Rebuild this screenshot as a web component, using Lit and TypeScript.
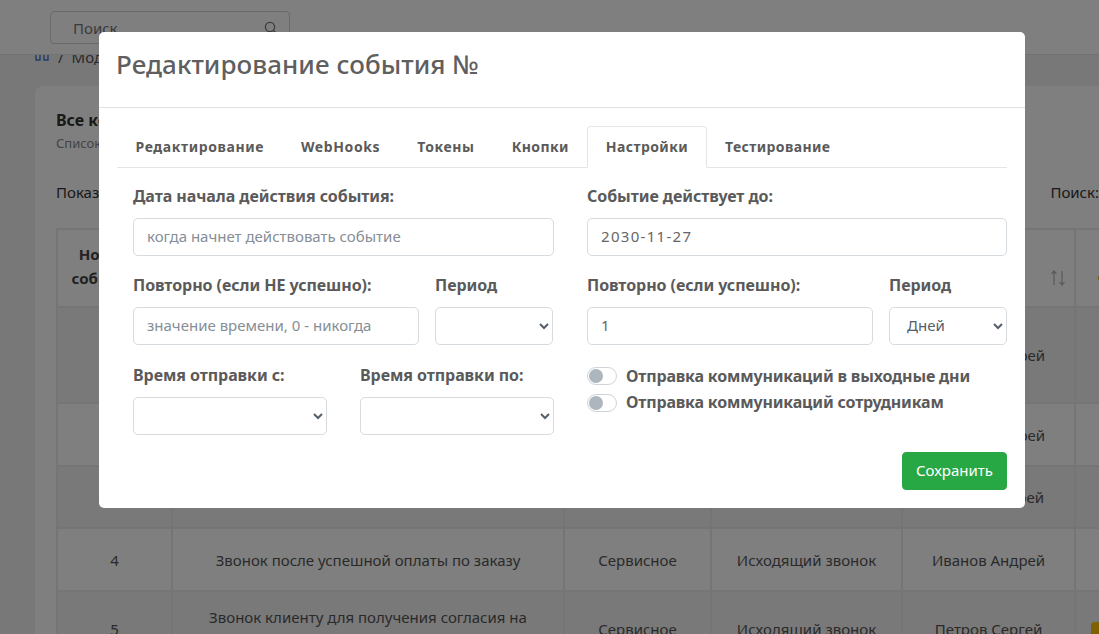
import { LitElement, html, css } from 'lit'
import { customElement } from 'lit/decorators.js'

const rows = [
  { n: '1', name: 'Звонок клиенту после оформления заказа', type: 'Сервисное', kind: 'Исходящий звонок', who: 'Иванов Андрей', h: 96 },
  { n: '2', name: 'Звонок клиенту после доставки', type: 'Сервисное', kind: 'Исходящий звонок', who: 'Иванов Андрей', h: 63 },
  { n: '3', name: 'Звонок клиенту при отмене заказа', type: 'Сервисное', kind: 'Исходящий звонок', who: 'Петров Андрей', h: 62 },
  { n: '4', name: 'Звонок после успешной оплаты по заказу', type: 'Сервисное', kind: 'Исходящий звонок', who: 'Иванов Андрей', h: 63 },
  { n: '5', name: 'Звонок клиенту для получения согласия на обработку данных', type: 'Сервисное', kind: 'Исходящий звонок', who: 'Петров Сергей', h: 76 }
]

const tabs = ['Редактирование', 'WebHooks', 'Токены', 'Кнопки', 'Настройки', 'Тестирование']

@customElement('app-root')
export class AppRoot extends LitElement {
  static styles = css`
    :host {
      display: block;
      position: relative;
      height: 634px;
      overflow: hidden;
      background: #f0f1f1;
      font-family: "Noto Sans", "Open Sans", sans-serif;
      font-size: 15px;
      color: #555;
    }

    /* page behind the modal */
    .topbar {
      position: relative;
      z-index: 1;
      height: 55px;
      background: #fff;
      border-bottom: 1px solid #e4e4e4;
      padding: 11px 0 0 50px;
      box-sizing: border-box;
    }
    .search {
      width: 240px;
      height: 33px;
      box-sizing: border-box;
      border: 1px solid #ced4da;
      border-radius: 4px;
      padding: 0 11px 0 22px;
      display: flex;
      align-items: center;
      justify-content: space-between;
      color: #777;
    }
    .crumbs {
      height: 31px;
      padding-left: 35px;
      display: flex;
      align-items: flex-start;
      color: #555;
    }
    .crumbs svg { display: block; margin-right: 9px; }
    .crumbs .sep { margin-right: 8px; margin-top: -8px; line-height: 20px; }
    .crumbs .mod { margin-top: -8px; line-height: 20px; }
    .card {
      margin-left: 35px;
      width: 1100px;
      height: 560px;
      background: #fff;
      border-radius: 8px;
      padding: 24px 0 0 21px;
      box-sizing: border-box;
      color: #333;
    }
    .card h4 { margin: 0; font-size: 16px; line-height: 20px; font-weight: 700; color: #333; }
    .card p { margin: 4px 0 0; font-size: 13px; line-height: 18px; color: #888; }
    .len {
      display: flex;
      justify-content: space-between;
      width: 1043px;
      margin-top: 27px;
      line-height: 26px;
    }
    table {
      margin-top: 23px;
      border-collapse: collapse;
      table-layout: fixed;
      width: 1070px;
      color: #555;
    }
    th, td {
      border: 2px solid #eaeaea;
      text-align: center;
      padding: 0 12px;
      line-height: 24px;
      vertical-align: middle;
    }
    th { height: 76px; font-weight: 700; color: #444; }
    th.num { height: 72px; padding: 0 32px 4px 12px; }
    tbody tr:nth-child(odd) { background: #f2f2f2; }
    .sort { display: block; margin: 20px -4px 0 auto; }
    .mark {
      display: block;
      width: 6px;
      height: 6px;
      border-radius: 50%;
      background: #f0a030;
      margin: 20px 0 0 10px;
    }
    .badge {
      display: block;
      width: 22px;
      height: 22px;
      border-radius: 4px;
      background: #ffc107;
      margin: 8px 0 0 3px;
    }

    /* overlay */
    .backdrop {
      position: absolute;
      inset: 0;
      z-index: 2;
      background: rgba(0, 0, 0, 0.5);
    }
    .modal {
      position: absolute;
      z-index: 3;
      left: 99px;
      top: 32px;
      width: 926px;
      height: 476px;
      box-sizing: border-box;
      background: #fff;
      border-radius: 5px;
      display: flex;
      flex-direction: column;
    }
    .modal-head {
      height: 76px;
      box-sizing: border-box;
      border-bottom: 1px solid #dee2e6;
      padding: 12px 18px 0 17px;
    }
    .modal-head h2 {
      margin: 0;
      font-size: 26px;
      line-height: 40px;
      font-weight: 500;
      letter-spacing: 0.05px;
      color: #5f5f5f;
    }
    .modal-body { padding: 18px 18px 0; }

    .tabs {
      display: flex;
      height: 42px;
      box-sizing: border-box;
      border-bottom: 1px solid #e3e6e8;
    }
    .tab {
      box-sizing: border-box;
      height: 42px;
      padding: 0 17.5px 2px 17.5px;
      display: flex;
      align-items: center;
      font-size: 14px;
      font-weight: 700;
      letter-spacing: 0.6px;
      color: #5a5a5a;
      border: 1px solid transparent;
      border-radius: 4px 4px 0 0;
    }
    .tab:nth-child(n+4) { letter-spacing: 0.4px; }
    .tab.active {
      border-color: #e3e6e8;
      border-bottom-color: #fff;
      background: #fff;
    }

    .panel {
      display: grid;
      grid-template-columns: 421px 420px;
      column-gap: 33px;
      align-items: start;
      padding: 15px 0 0 16px;
    }
    .col { display: flex; flex-direction: column; gap: 16px; }
    .line { display: flex; gap: 16px; }
    .line.short { width: 420px; }
    .line.wide { gap: 33px; margin-top: 1px; }
    .field { display: flex; flex-direction: column; gap: 8px; flex: 1; min-width: 0; }
    .field.period { flex: 0 0 118px; }
    label {
      font-size: 16px;
      line-height: 27px;
      font-weight: 700;
      letter-spacing: -0.06px;
      color: #5a5a5a;
      white-space: nowrap;
    }
    input, select {
      box-sizing: border-box;
      width: 100%;
      height: 38px;
      border: 1px solid #d6dbe0;
      border-radius: 5px;
      background: #fff;
      padding: 0 13px 2px;
      font: 400 15px "Noto Sans", "Open Sans", sans-serif;
      color: #666;
      outline: none;
    }
    select { color: #56606a; }
    input::placeholder { color: #868e96; opacity: 1; }
    input.date { letter-spacing: 1.3px; }

    .switches {
      display: flex;
      flex-direction: column;
      gap: 7px;
      padding-top: 5px;
    }
    .switch {
      display: flex;
      align-items: center;
      gap: 9px;
      height: 19px;
      font-size: 16px;
      font-weight: 700;
      letter-spacing: -0.17px;
      color: #5a5a5a;
      white-space: nowrap;
    }
    .track {
      box-sizing: border-box;
      width: 30px;
      height: 18px;
      border: 1px solid #ced4da;
      border-radius: 9px;
      background: #fff;
      padding: 1px;
    }
    .switch + .switch .track { margin-top: 2px; }
    .knob {
      width: 14px;
      height: 14px;
      border-radius: 50%;
      background: #adb5bd;
    }

    .foot {
      display: flex;
      justify-content: flex-end;
      margin-top: 17px;
    }
    .save {
      box-sizing: border-box;
      width: 105px;
      height: 38px;
      border: 1px solid #28a745;
      border-radius: 4px;
      background: #28a745;
      color: #fff;
      padding: 0 0 2px;
      font: 400 15px "Noto Sans", "Open Sans", sans-serif;
    }
  `

  render () {
    return html`
      <div class="topbar">
        <div class="search">
          <span>Поиск...</span>
          <svg width="14" height="14" viewBox="0 0 14 14" fill="none" stroke="#777" stroke-width="1.3">
            <circle cx="6" cy="6" r="4.6"></circle>
            <path d="M9.5 9.5 13 13"></path>
          </svg>
        </div>
      </div>
      <div class="crumbs">
        <svg width="14" height="6" viewBox="0 0 14 6" fill="none" stroke="#3f78d8" stroke-width="1.4">
          <path d="M1 0V5H5V0"></path>
          <path d="M9 0V5H13V0"></path>
        </svg>
        <span class="sep">/</span>
        <span class="mod">Модули</span>
      </div>
      <div class="card">
        <h4>Все коммуникации</h4>
        <p>Список всех событий</p>
        <div class="len">
          <span>Показать записи</span>
          <span>Поиск:</span>
        </div>
        <table>
          <colgroup>
            <col style="width:115px"><col style="width:392px"><col style="width:147px">
            <col style="width:191px"><col style="width:173px"><col style="width:52px">
          </colgroup>
          <thead>
            <tr>
              <th class="num">Номер события</th>
              <th>Название</th>
              <th>Тип</th>
              <th>Канал</th>
              <th>
                <svg class="sort" width="16" height="16" viewBox="0 0 16 16" fill="none" stroke="#b4b4b4" stroke-width="1.2">
                  <path d="M4 15V1M1.5 3.8 4 1l2.5 2.8"></path>
                  <path d="M12 1V15M9.5 12.2 12 15l2.5-2.8"></path>
                </svg>
              </th>
              <th><span class="mark"></span></th>
            </tr>
          </thead>
          <tbody>
            ${rows.map(r => html`
              <tr style="height:${r.h}px">
                <td>${r.n}</td>
                <td>${r.name}</td>
                <td>${r.type}</td>
                <td>${r.kind}</td>
                <td>${r.who}</td>
                <td>${r.n === '5' ? html`<span class="badge"></span>` : ''}</td>
              </tr>
            `)}
          </tbody>
        </table>
      </div>

      <div class="backdrop"></div>

      <div class="modal">
        <div class="modal-head"><h2>Редактирование события №</h2></div>
        <div class="modal-body">
          <div class="tabs">
            ${tabs.map(t => html`<div class="tab ${t === 'Настройки' ? 'active' : ''}">${t}</div>`)}
          </div>
          <div class="panel">
            <div class="col">
              <div class="field">
                <label>Дата начала действия события:</label>
                <input placeholder="когда начнет действовать событие">
              </div>
              <div class="line short">
                <div class="field">
                  <label>Повторно (если НЕ успешно):</label>
                  <input placeholder="значение времени, 0 - никогда">
                </div>
                <div class="field period">
                  <label>Период</label>
                  <select><option></option></select>
                </div>
              </div>
              <div class="line wide">
                <div class="field">
                  <label>Время отправки с:</label>
                  <select><option></option></select>
                </div>
                <div class="field">
                  <label>Время отправки по:</label>
                  <select><option></option></select>
                </div>
              </div>
            </div>
            <div class="col">
              <div class="field">
                <label>Событие действует до:</label>
                <input class="date" value="2030-11-27">
              </div>
              <div class="line">
                <div class="field">
                  <label>Повторно (если успешно):</label>
                  <input value="1">
                </div>
                <div class="field period">
                  <label>Период</label>
                  <select><option>Дней</option></select>
                </div>
              </div>
              <div class="switches">
                <div class="switch"><div class="track"><div class="knob"></div></div>Отправка коммуникаций в выходные дни</div>
                <div class="switch"><div class="track"><div class="knob"></div></div>Отправка коммуникаций сотрудникам</div>
              </div>
            </div>
          </div>
          <div class="foot"><button class="save">Сохранить</button></div>
        </div>
      </div>
    `
  }
}
